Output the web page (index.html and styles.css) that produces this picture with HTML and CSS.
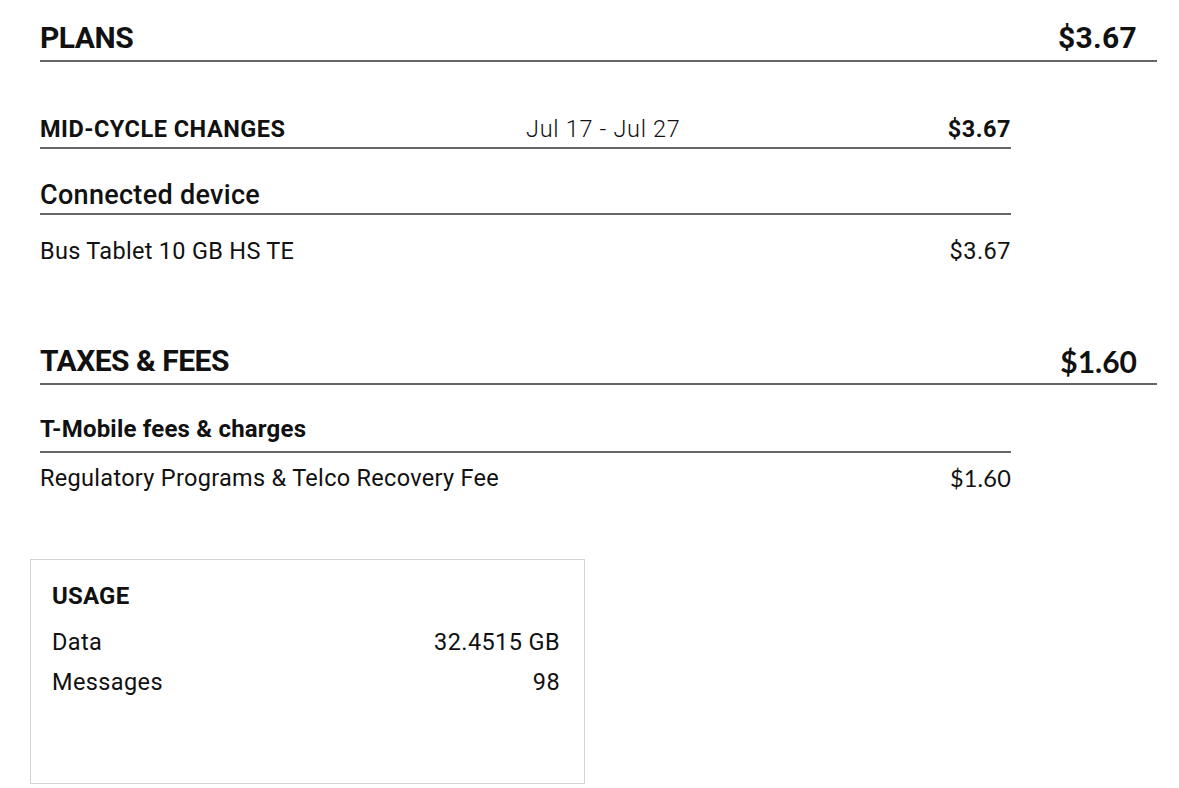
FILE: index.html
```html
<!DOCTYPE html>
<html lang="en">
<head>
<meta charset="utf-8">
<title>Bill details</title>
<link rel="stylesheet" href="styles.css">
</head>
<body>
<div class="page">
  <section class="block">
    <div class="sec-head">
      <span class="sec-title">PLANS</span>
      <span class="sec-amount">$3.67</span>
    </div>
    <div class="sub">
      <div class="row row-group">
        <span class="group-title">MID-CYCLE CHANGES</span>
        <span class="dates">Jul 17 - Jul 27</span>
        <span class="amt amt-bold">$3.67</span>
      </div>
      <div class="row row-cat">
        <span class="cat-title">Connected device</span>
      </div>
      <div class="row row-item">
        <span class="item-name">Bus Tablet 10 GB HS TE</span>
        <span class="amt">$3.67</span>
      </div>
    </div>
  </section>

  <section class="block block-taxes">
    <div class="sec-head">
      <span class="sec-title">TAXES &amp; FEES</span>
      <span class="sec-amount sec-amount-alt">$1.60</span>
    </div>
    <div class="sub">
      <div class="row row-fees">
        <span class="fees-title">T-Mobile fees &amp; charges</span>
      </div>
      <div class="row row-item row-item-fee">
        <span class="item-name">Regulatory Programs &amp; Telco Recovery Fee</span>
        <span class="amt amt-alt">$1.60</span>
      </div>
    </div>
  </section>

  <section class="usage">
    <h3 class="usage-title">USAGE</h3>
    <div class="usage-row"><span>Data</span><span>32.4515 GB</span></div>
    <div class="usage-row"><span>Messages</span><span>98</span></div>
  </section>
</div>
</body>
</html>
```

FILE: styles.css
```css
* { box-sizing: border-box; }
html, body { margin: 0; padding: 0; background: #fff; }
body {
  font-family: Roboto, "Liberation Sans", sans-serif;
  color: #111;
}
.page {
  padding-left: 40px;
  width: 1157px;
}
.sec-head {
  display: flex;
  justify-content: space-between;
  align-items: center;
  padding-top: 16px;
  height: 62px;
  border-bottom: 2px solid #666;
}
.sec-title {
  font-size: 30px;
  font-weight: 700;
  line-height: 44px;
  letter-spacing: -0.5px;
}
.sec-amount {
  font-size: 30px;
  font-weight: 700;
  line-height: 44px;
  padding-right: 20px;
  letter-spacing: 0.3px;
}
.sec-amount-alt { font-family: Lato, Roboto, sans-serif; letter-spacing: 0; }
.sub { width: 971px; }
.row {
  display: flex;
  align-items: center;
  line-height: 36px;
}
.row-group {
  margin-top: 49px;
  height: 38px;
  border-bottom: 2px solid #666;
}
.group-title {
  font-size: 23.5px;
  font-weight: 700;
  letter-spacing: 0.5px;
  width: 486px;
}
.dates {
  font-size: 23.5px;
  font-weight: 300;
  flex: 1;
  letter-spacing: 0.7px;
}
.amt {
  font-size: 23.5px;
  font-weight: 400;
  text-align: right;
  margin-left: auto;
  letter-spacing: 0.5px;
}
.amt-bold { font-weight: 700; }
.amt-alt { font-family: Lato, Roboto, sans-serif; letter-spacing: 0.2px; }
.row-cat {
  margin-top: 28px;
  height: 38px;
  border-bottom: 2px solid #666;
}
.cat-title {
  font-size: 27px;
  font-weight: 500;
  letter-spacing: 0.3px;
}
.row-item { margin-top: 18px; height: 36px; }
.item-name {
  font-size: 23.5px;
  font-weight: 400;
  letter-spacing: 0.3px;
}
.block-taxes { margin-top: 54px; }
.row-fees {
  margin-top: 26px;
  height: 42px;
  border-bottom: 2px solid #666;
  align-items: flex-start;
}
.fees-title {
  font-size: 24px;
  font-weight: 700;
  letter-spacing: 0.2px;
}
.row-item-fee { margin-top: 7px; }
.usage {
  margin-top: 63px;
  margin-left: -10px;
  width: 555px;
  height: 225px;
  border: 1px solid #d4d4d4;
  padding: 20px 24px 0 21px;
}
.usage-title {
  margin: 0 0 10px;
  font-size: 24px;
  font-weight: 700;
  line-height: 32px;
  letter-spacing: 0.2px;
}
.usage-row {
  display: flex;
  justify-content: space-between;
  font-size: 23.5px;
  line-height: 40px;
  letter-spacing: 0.4px;
}
```
